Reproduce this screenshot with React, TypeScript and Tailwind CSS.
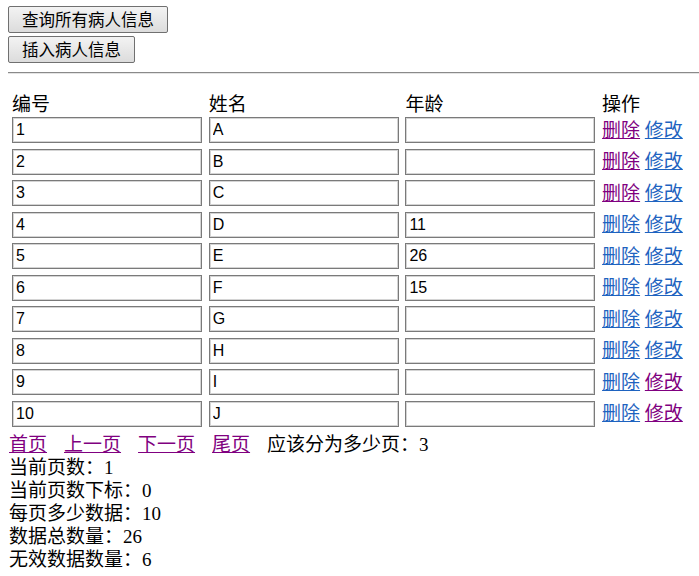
import React from 'react';

type Patient = { id: string; name: string; age: string; delVisited: boolean; editVisited: boolean };

const patients: Patient[] = [
  { id: '1', name: 'A', age: '', delVisited: true, editVisited: false },
  { id: '2', name: 'B', age: '', delVisited: true, editVisited: false },
  { id: '3', name: 'C', age: '', delVisited: true, editVisited: false },
  { id: '4', name: 'D', age: '11', delVisited: false, editVisited: false },
  { id: '5', name: 'E', age: '26', delVisited: false, editVisited: false },
  { id: '6', name: 'F', age: '15', delVisited: false, editVisited: false },
  { id: '7', name: 'G', age: '', delVisited: false, editVisited: false },
  { id: '8', name: 'H', age: '', delVisited: false, editVisited: false },
  { id: '9', name: 'I', age: '', delVisited: false, editVisited: true },
  { id: '10', name: 'J', age: '', delVisited: false, editVisited: true },
];

const SERIF = "font-['Liberation_Serif','Noto_Sans_CJK_SC',serif]";
const SANS = "font-['Noto_Sans_CJK_SC','Liberation_Sans',sans-serif]";

function Cell({ value }: { value: string }) {
  return (
    <input
      readOnly
      value={value}
      className="w-[190px] h-[26px] px-[3px] border border-[#7a7a7a] shadow-[inset_0_0_0_1px_#d4d4d4] bg-white text-[16px] text-black font-['Liberation_Sans',sans-serif] outline-none"
    />
  );
}

function Btn({ children }: { children: React.ReactNode }) {
  return (
    <button
      className={`h-[27px] px-[13px] border border-[#707070] rounded-[2px] bg-gradient-to-b from-[#f3f3f3] to-[#dcdcdc] text-[16.5px] leading-none text-black ${SANS}`}
    >
      {children}
    </button>
  );
}

export default function App() {
  const visited = 'text-[#800080] underline';
  const unvisited = 'text-[#1e63c0] underline';

  return (
    <div className={`min-h-screen bg-white text-black text-[19px] leading-[23px] ${SERIF}`}>
      {/* BUTTONS */}
      <div className="pt-[6px] pl-2 flex flex-col items-start gap-[3px]">
        <Btn>查询所有病人信息</Btn>
        <Btn>插入病人信息</Btn>
      </div>

      {/* DIVIDER */}
      <div className="ml-2 mt-[9px] border-t border-t-[#8a8a8a] border-b border-b-[#e4e4e4]" />

      {/* TABLE */}
      <div className="pl-[12px] mt-[13px]">
        <div className={`grid grid-cols-[190px_190px_190px_auto] gap-x-[6.7px] h-[30px] items-center ${SANS}`}>
          <span>编号</span>
          <span>姓名</span>
          <span>年龄</span>
          <span>操作</span>
        </div>
        <div className="flex flex-col gap-[5.5px]">
          {patients.map((p) => (
            <div key={p.id} className="grid grid-cols-[190px_190px_190px_auto] gap-x-[6.7px] items-center">
              <Cell value={p.id} />
              <Cell value={p.name} />
              <Cell value={p.age} />
              <span className="whitespace-nowrap">
                <a className={p.delVisited ? visited : unvisited}>删除</a>{' '}
                <a className={p.editVisited ? visited : unvisited}>修改</a>
              </span>
            </div>
          ))}
        </div>
      </div>

      {/* PAGINATION & STATS */}
      <div className="pl-[9px] mt-[6px]">
        <div>
          <a className="text-[#800080] underline mr-[17px]">首页</a>
          <a className="text-[#800080] underline mr-[17px]">上一页</a>
          <a className="text-[#800080] underline mr-[17px]">下一页</a>
          <a className="text-[#800080] underline mr-[17px]">尾页</a>
          <span>应该分为多少页：3</span>
        </div>
        <div>当前页数：1</div>
        <div>当前页数下标：0</div>
        <div>每页多少数据：10</div>
        <div>数据总数量：26</div>
        <div>无效数据数量：6</div>
      </div>
    </div>
  );
}
